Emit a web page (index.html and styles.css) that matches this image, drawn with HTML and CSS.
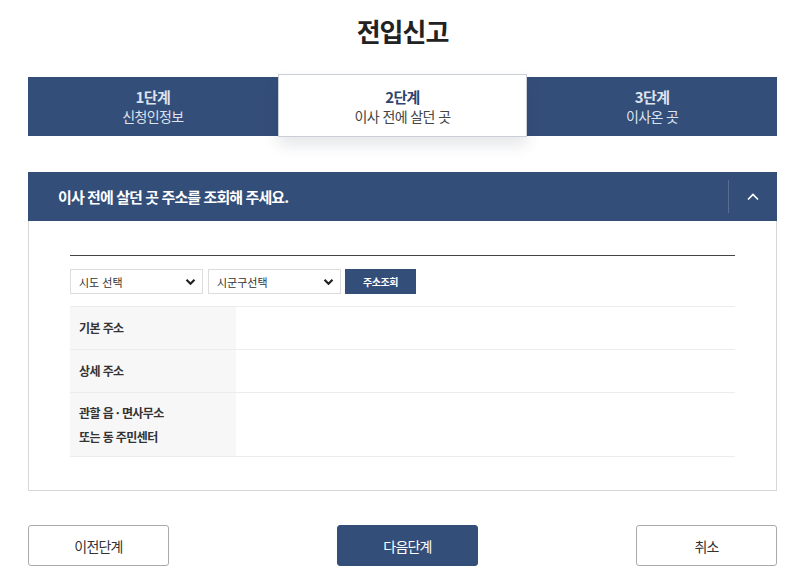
FILE: index.html
```html
<!DOCTYPE html>
<html lang="ko">
<head>
    <meta charset="UTF-8">
    <meta name="viewport" content="width=device-width, initial-scale=1.0">
    <title>전입신고</title>
    <link rel="stylesheet" href="styles.css">
</head>
<body>
    <div class="page">
        <h1 class="title">전입신고</h1>

        <ol class="steps">
            <li class="step">
                <strong>1단계</strong>
                <span>신청인정보</span>
            </li>
            <li class="step active">
                <strong>2단계</strong>
                <span>이사 전에 살던 곳</span>
            </li>
            <li class="step">
                <strong>3단계</strong>
                <span>이사온 곳</span>
            </li>
        </ol>

        <section class="panel">
            <div class="panel-head">
                <h2>이사 전에 살던 곳 주소를 조회해 주세요.</h2>
                <button class="toggle" type="button" aria-label="접기">
                    <svg width="14" height="9" viewBox="0 0 14 9"><path d="M2 7.5 L7 2.5 L12 7.5" fill="none" stroke="#fff" stroke-width="1.6"/></svg>
                </button>
            </div>
            <div class="panel-body">
                <div class="search-row">
                    <div class="select">
                        <span>시도 선택</span>
                        <svg width="11" height="8" viewBox="0 0 11 8"><path d="M1.5 1.8 L5.5 5.8 L9.5 1.8" fill="none" stroke="#222" stroke-width="2.2"/></svg>
                    </div>
                    <div class="select">
                        <span>시군구선택</span>
                        <svg width="11" height="8" viewBox="0 0 11 8"><path d="M1.5 1.8 L5.5 5.8 L9.5 1.8" fill="none" stroke="#222" stroke-width="2.2"/></svg>
                    </div>
                    <button class="btn-search" type="button">주소조회</button>
                </div>

                <table class="addr-table">
                    <tr>
                        <th>기본 주소</th>
                        <td></td>
                    </tr>
                    <tr>
                        <th>상세 주소</th>
                        <td></td>
                    </tr>
                    <tr class="tall">
                        <th>관할 읍 · 면사무소<br>또는 동 주민센터</th>
                        <td></td>
                    </tr>
                </table>
            </div>
        </section>

        <div class="actions">
            <button class="btn" type="button">이전단계</button>
            <button class="btn primary" type="button">다음단계</button>
            <button class="btn last" type="button">취소</button>
        </div>
    </div>
</body>
</html>
```

FILE: styles.css
```css
body {
    margin: 0;
    font-family: "Noto Sans CJK KR", "Noto Sans", sans-serif;
    color: #333;
    background: #fff;
}
.page {
    padding: 0 15px 0 28px;
}
.title {
    margin: 0;
    padding-top: 12px;
    height: 62px;
    box-sizing: border-box;
    text-align: center;
    font-size: 26px;
    font-weight: 700;
    color: #222;
    letter-spacing: -1px;
    line-height: 38px;
}
.steps {
    list-style: none;
    margin: 15px 0 0;
    padding: 0;
    display: grid;
    grid-template-columns: 1fr 1fr 1fr;
    height: 59px;
    background: #344e7a;
}
.step {
    display: flex;
    flex-direction: column;
    align-items: center;
    justify-content: center;
    color: #dde3ee;
    letter-spacing: -0.6px;
}
.step strong {
    font-size: 15px;
    line-height: 19px;
}
.step span {
    font-size: 14px;
    line-height: 20px;
}
.step.active {
    margin: -3px 0 -1px;
    background: #fff;
    border: 1px solid #c9ced9;
    box-shadow: 0 8px 14px rgba(40, 50, 70, 0.12);
    color: #444;
    position: relative;
    padding-top: 1px;
}
.step.active strong {
    color: #2f4470;
}
.panel {
    margin-top: 36px;
    border: 1px solid #d6d6d6;
    border-top: none;
}
.panel-head {
    display: flex;
    align-items: center;
    height: 49px;
    background: #344e7a;
    margin: 0 -1px;
}
.panel-head h2 {
    flex: 1;
    margin: 0;
    padding-left: 30px;
    font-size: 15px;
    font-weight: 700;
    color: #fff;
    letter-spacing: -0.9px;
}
.toggle {
    width: 49px;
    height: 33px;
    border: none;
    border-left: 1px solid rgba(255, 255, 255, 0.18);
    background: none;
    padding: 0;
    display: flex;
    align-items: center;
    justify-content: center;
}
.panel-body {
    padding: 34px 41px 33px 41px;
}
.search-row {
    border-top: 1px solid #444;
    padding: 13px 0 12px;
    display: flex;
    gap: 5px;
}
.select {
    width: 133px;
    height: 25px;
    box-sizing: border-box;
    border: 1px solid #dcdcdc;
    display: flex;
    align-items: center;
    justify-content: space-between;
    padding: 0 6px 0 8px;
    font-size: 11px;
    color: #333;
}
.btn-search {
    margin-left: -1px;
    width: 71px;
    height: 25px;
    border: none;
    background: #344e7a;
    color: #fff;
    font-family: inherit;
    font-size: 10px;
    font-weight: 700;
    letter-spacing: -0.5px;
}
.addr-table {
    width: 100%;
    border-collapse: collapse;
    border-top: 1px solid #ececec;
}
.addr-table th,
.addr-table td {
    border-bottom: 1px solid #ececec;
    height: 42px;
    padding: 0;
}
.addr-table th {
    width: 157px;
    background: #f7f7f7;
    text-align: left;
    padding-left: 9px;
    font-size: 12px;
    font-weight: 700;
    color: #333;
    letter-spacing: -0.6px;
    line-height: 24px;
}
.addr-table .tall th {
    height: 63px;
}
.actions {
    margin-top: 34px;
    display: flex;
}
.btn {
    width: 141px;
    height: 41px;
    border: 1px solid #aaa;
    border-radius: 3px;
    background: #fff;
    color: #333;
    font-family: inherit;
    font-size: 14px;
    letter-spacing: -0.8px;
}
.btn.primary {
    margin-left: 168px;
    border-color: #344e7a;
    background: #344e7a;
    color: #fff;
}
.btn.last {
    margin-left: auto;
}
```
